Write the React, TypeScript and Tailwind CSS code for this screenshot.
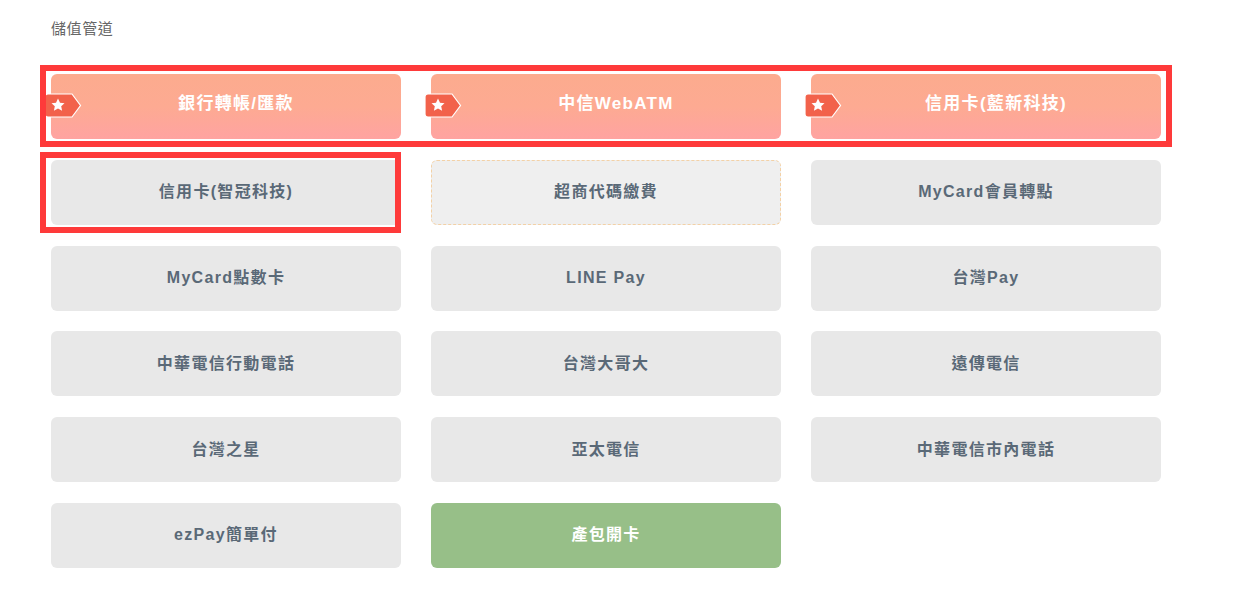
import React from "react";

type Item = { label: string; kind?: "hot" | "dash" | "green" };

const items: Item[] = [
  { label: "銀行轉帳/匯款", kind: "hot" },
  { label: "中信WebATM", kind: "hot" },
  { label: "信用卡(藍新科技)", kind: "hot" },
  { label: "信用卡(智冠科技)" },
  { label: "超商代碼繳費", kind: "dash" },
  { label: "MyCard會員轉點" },
  { label: "MyCard點數卡" },
  { label: "LINE Pay" },
  { label: "台灣Pay" },
  { label: "中華電信行動電話" },
  { label: "台灣大哥大" },
  { label: "遠傳電信" },
  { label: "台灣之星" },
  { label: "亞太電信" },
  { label: "中華電信市內電話" },
  { label: "ezPay簡單付" },
  { label: "產包開卡", kind: "green" },
];

function Badge() {
  return (
    <svg
      className="absolute left-[-7px] top-[19px]"
      width="38"
      height="25"
      viewBox="0 0 38 25"
    >
      <path
        d="M4 1 H28 L36.5 12.5 L28 24 H4 Q1 24 1 21 V4 Q1 1 4 1 Z"
        fill="#f2624b"
        stroke="#ffffff"
        strokeWidth="1.2"
      />
      <path
        d="M14 5.6 L16 9.7 L20.5 10.2 L17.2 13.2 L18.1 17.7 L14 15.4 L9.9 17.7 L10.8 13.2 L7.5 10.2 L12 9.7 Z"
        fill="#ffffff"
      />
    </svg>
  );
}

export default function App() {
  return (
    <div
      className="relative min-h-[590px] bg-white px-[51px] pt-[19px]"
      style={{ fontFamily: '"Liberation Sans", "Noto Sans CJK TC", sans-serif' }}
    >
      <div className="text-[15px] leading-[20px] tracking-[0.6px] text-[#666666]">儲值管道</div>
      <div className="mt-[35px] grid w-[1110px] grid-cols-3 gap-x-[30px] gap-y-[20.8px]">
        {items.map((it) => {
          let cls =
            "relative flex h-[65px] items-center justify-center rounded-[6px] font-bold tracking-[1.3px] ";
          if (it.kind === "hot") {
            cls +=
              "bg-linear-to-t from-[#ffa3a1] via-[#fdaa92] to-[#fcab8e] text-white text-[17px] pb-[5px] pl-[20px]";
          } else if (it.kind === "green") {
            cls += "bg-[#97bf88] text-white text-[16px]";
          } else if (it.kind === "dash") {
            cls += "border border-dashed border-[#f3d1a6] bg-[#efefef] text-[#5a6977] text-[16px]";
          } else {
            cls += "bg-[#e8e8e8] text-[#5a6977] text-[16px]";
          }
          return (
            <div key={it.label} className={cls}>
              {it.kind === "hot" && <Badge />}
              <span>{it.label}</span>
            </div>
          );
        })}
      </div>
      <div className="pointer-events-none absolute left-[40px] top-[65px] h-[82px] w-[1132px] border-[6px] border-[#fe3a3a]" />
      <div className="pointer-events-none absolute left-[40px] top-[152px] h-[81px] w-[361px] border-[6px] border-[#fe3a3a]" />
    </div>
  );
}
